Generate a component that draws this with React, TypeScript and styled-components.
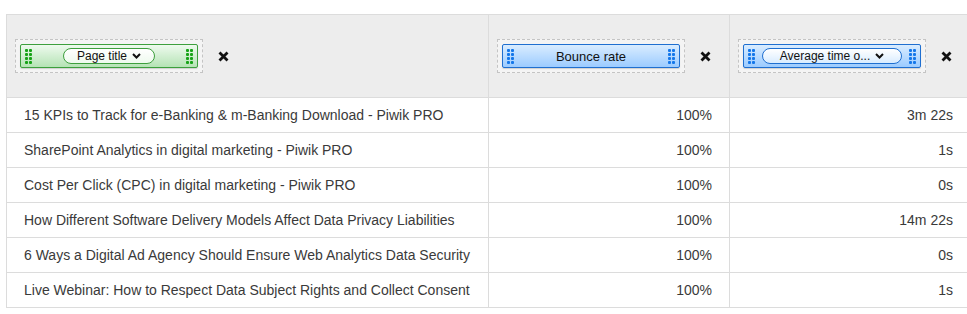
import React from 'react';
import styled, { createGlobalStyle } from 'styled-components';

const GlobalStyle = createGlobalStyle`
  body {
    margin: 0;
    background: #fff;
    font-family: "Liberation Sans", Arial, sans-serif;
    overflow: hidden;
  }
`;

type Tone = 'green' | 'blue';

const tones = {
  green: {
    top: '#eefaee',
    bottom: '#b5e3b5',
    border: '#3d9f3d',
    dot: '#17a317',
  },
  blue: {
    top: '#d9ecff',
    bottom: '#9ccbff',
    border: '#1f6fd0',
    dot: '#1477ea',
  },
};

interface Row {
  title: string;
  bounce: string;
  time: string;
}

const rows: Row[] = [
  { title: '15 KPIs to Track for e-Banking & m-Banking Download - Piwik PRO', bounce: '100%', time: '3m 22s' },
  { title: 'SharePoint Analytics in digital marketing - Piwik PRO', bounce: '100%', time: '1s' },
  { title: 'Cost Per Click (CPC) in digital marketing - Piwik PRO', bounce: '100%', time: '0s' },
  { title: 'How Different Software Delivery Models Affect Data Privacy Liabilities', bounce: '100%', time: '14m 22s' },
  { title: '6 Ways a Digital Ad Agency Should Ensure Web Analytics Data Security', bounce: '100%', time: '0s' },
  { title: 'Live Webinar: How to Respect Data Subject Rights and Collect Consent', bounce: '100%', time: '1s' },
];

const Grip: React.FC<{ tone: Tone }> = ({ tone }) => (
  <GripBox>
    {Array.from({ length: 8 }).map((_, i) => (
      <Dot key={i} $tone={tone} />
    ))}
  </GripBox>
);

const Chevron = () => (
  <svg width="9" height="6" viewBox="0 0 9 6">
    <path d="M1 1 L4.5 4.5 L8 1" fill="none" stroke="#111" strokeWidth="2" />
  </svg>
);

const Close = () => (
  <CloseBtn>
    <svg width="11" height="11" viewBox="0 0 11 11">
      <path d="M1.5 1.5 L9.5 9.5 M9.5 1.5 L1.5 9.5" stroke="#111" strokeWidth="2.8" />
    </svg>
  </CloseBtn>
);

const Column: React.FC<{ tone: Tone; label: string; pill?: boolean; pillWidth?: number }> = ({
  tone,
  label,
  pill,
  pillWidth,
}) => (
  <HeadInner>
    <DropZone>
      <Chip $tone={tone}>
        <Grip tone={tone} />
        {pill ? (
          <Pill $tone={tone} $width={pillWidth || 92}>
            {label} <Chevron />
          </Pill>
        ) : (
          <ChipLabel>{label}</ChipLabel>
        )}
        <Grip tone={tone} />
      </Chip>
    </DropZone>
    <Close />
  </HeadInner>
);

export default function App() {
  return (
    <Page>
      <GlobalStyle />
      <Table>
        <colgroup>
          <col style={{ width: 482 }} />
          <col style={{ width: 241 }} />
          <col style={{ width: 241 }} />
        </colgroup>
        <thead>
          <tr>
            <Th>
              <Column tone="green" label="Page title" pill pillWidth={92} />
            </Th>
            <Th>
              <Column tone="blue" label="Bounce rate" />
            </Th>
            <Th>
              <Column tone="blue" label="Average time o..." pill pillWidth={140} />
            </Th>
          </tr>
        </thead>
        <tbody>
          {rows.map((r) => (
            <tr key={r.title}>
              <Td>{r.title}</Td>
              <Td $right>{r.bounce}</Td>
              <Td $right>{r.time}</Td>
            </tr>
          ))}
        </tbody>
      </Table>
    </Page>
  );
}

const Page = styled.div`
  padding: 14px 0 0 6px;
  width: 980px;
`;

const Table = styled.table`
  border-collapse: collapse;
  table-layout: fixed;
  width: 965px;
  color: #3a3a3a;
  font-size: 14px;
`;

const Th = styled.th`
  background: #ededed;
  border: 1px solid #dcdcdc;
  height: 82px;
  padding: 0 0 0 8px;
  font-weight: normal;
  text-align: left;
  vertical-align: middle;
`;

const HeadInner = styled.div`
  display: flex;
  align-items: center;
`;

const DropZone = styled.div`
  border: 1px dashed #c4c4c4;
  background: #f4f4f4;
  padding: 4px;
`;

const Chip = styled.div<{ $tone: Tone }>`
  width: 178px;
  height: 24px;
  box-sizing: border-box;
  display: flex;
  align-items: center;
  justify-content: space-between;
  padding: 0 4px;
  border: 1px solid ${({ $tone }) => tones[$tone].border};
  border-radius: 2px;
  background: linear-gradient(${({ $tone }) => tones[$tone].top}, ${({ $tone }) => tones[$tone].bottom});
  box-shadow: 0 1px 1px rgba(0, 0, 0, 0.15);
`;

const GripBox = styled.div`
  display: grid;
  grid-template-columns: 3px 3px;
  grid-auto-rows: 3px;
  gap: 1px;
`;

const Dot = styled.span<{ $tone: Tone }>`
  background: ${({ $tone }) => tones[$tone].dot};
  border-radius: 1px;
`;

const Pill = styled.div<{ $tone: Tone; $width: number }>`
  width: ${({ $width }) => $width}px;
  height: 16px;
  box-sizing: border-box;
  border: 1px solid ${({ $tone }) => tones[$tone].border};
  border-radius: 8px;
  background: linear-gradient(#ffffff, ${({ $tone }) => tones[$tone].top});
  display: flex;
  align-items: center;
  justify-content: center;
  gap: 5px;
  font-size: 12px;
  color: #111;
`;

const ChipLabel = styled.span`
  font-size: 13px;
  color: #111;
`;

const CloseBtn = styled.span`
  display: flex;
  margin-left: 15px;
`;

const Td = styled.td<{ $right?: boolean }>`
  border: 1px solid #dcdcdc;
  height: 34px;
  padding: 0 17px;
  text-align: ${({ $right }) => ($right ? 'right' : 'left')};
  white-space: nowrap;
`;
